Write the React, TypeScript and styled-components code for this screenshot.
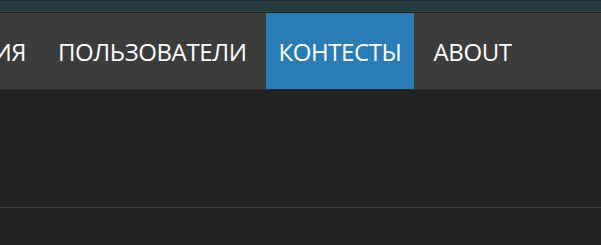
import React from 'react'
import styled, { createGlobalStyle } from 'styled-components'

const GlobalStyle = createGlobalStyle`
  html, body {
    margin: 0;
    padding: 0;
    background: #222222;
    overflow: hidden;
  }
`

const items = [
  { label: 'ИНФОРМАЦИЯ' },
  { label: 'ПОЛЬЗОВАТЕЛИ' },
  { label: 'КОНТЕСТЫ', active: true },
  { label: 'ABOUT' },
]

export default function App() {
  return (
    <Page>
      <GlobalStyle />
      <TopStrip />
      <NavBar>
        <NavRow>
          {items.map((item) => (
            <NavItem key={item.label} $active={item.active}>
              {item.label}
            </NavItem>
          ))}
        </NavRow>
      </NavBar>
      <Content>
        <Divider />
      </Content>
    </Page>
  )
}

const Page = styled.div`
  width: 601px;
  height: 245px;
  display: flex;
  flex-direction: column;
  background: #222222;
  font-family: "Open Sans", "Noto Sans", sans-serif;
`

const TopStrip = styled.div`
  height: 12px;
  background: #263b3f;
  border-top: 1px solid #1d2b2e;
  box-sizing: border-box;
  border-bottom: 1px solid #2f474b;
`

const NavBar = styled.nav`
  height: 76px;
  margin-top: 1px;
  background: #3c3c3c;
  overflow: hidden;
  box-shadow: 0 1px 0 #2b2b2b;
`

const NavRow = styled.div`
  display: flex;
  height: 100%;
  margin-left: -158px;
  gap: 8px;
`

const NavItem = styled.div<{ $active?: boolean }>`
  display: flex;
  align-items: center;
  padding: 0 12px;
  height: 100%;
  color: #ffffff;
  font-size: 24px;
  letter-spacing: -0.4px;
  white-space: nowrap;
  background: ${(p) => (p.$active ? '#297cb6' : 'transparent')};
`

const Content = styled.div`
  flex: 1;
  padding-top: 118px;
`

const Divider = styled.div`
  height: 1px;
  background: #3b3b3b;
`
